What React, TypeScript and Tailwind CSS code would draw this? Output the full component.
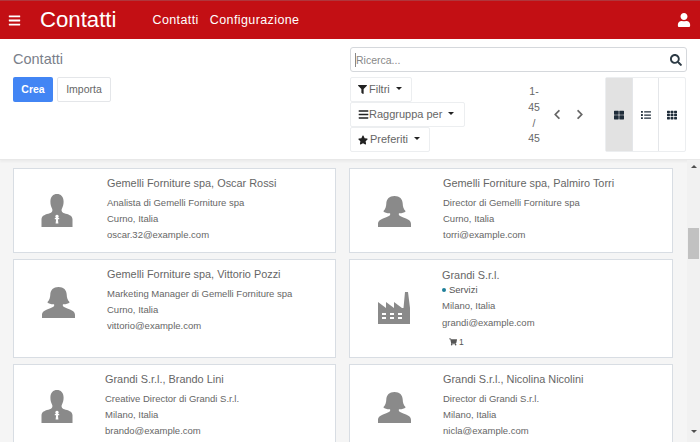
import React from "react";
import { FaBars, FaUser, FaFilter, FaStar, FaChevronLeft, FaChevronRight, FaThLarge, FaList, FaTh, FaShoppingCart, FaSearch } from "react-icons/fa";

const Male = () => (
  <svg viewBox="0 0 32 33" className="w-[32px] h-[33px]" aria-hidden="true">
    <path fill="#8a8a8a" d="M16 0c3.800 0 6.600 2.600 6.600 7.500 0 2.600-.6 5-1.500 6.700-.5.9-.7 2-.3 3 .4 1 1.400 1.600 2.500 2 3.500 1 8.200 2 8.200 6V33H.5v-7.800c0-4 4.700-5 8.200-6 1.100-.4 2.100-1 2.500-2 .4-1 .2-2.100-.3-3C10 12.500 9.400 10.100 9.400 7.500 9.400 2.600 12.200 0 16 0z" />
    <path fill="#fff" d="M16 20.800a1.700 1.700 0 0 1 1.300 2.800l-.3.400h1.200v1.300h-1.300l.5 4.200h-2.800l.5-4.200h-1.300V24h1.200l-.3-.4A1.700 1.700 0 0 1 16 20.800z" />
  </svg>
);
const Female = () => (
  <svg viewBox="0 0 33 31" className="w-[33px] h-[31px]" aria-hidden="true">
    <path fill="#8a8a8a" d="M16.500 0c5.200 0 8 3 8.200 7.500.1 2.800.6 5.600 3 7.800-1.500 1.500-4.500 2.200-6.700 2-.3.800-.3 1.600.3 2.200 1.500 1.300 4 1.800 6.700 3 2.700 1.100 5 2.500 5 5.500v3H0v-3c0-3 2.300-4.400 5-5.500 2.700-1.200 5.200-1.700 6.700-3 .6-.6.600-1.400.3-2.200-2.200.2-5.200-.5-6.700-2 2.400-2.200 2.900-5 3-7.800C8.500 3 11.300 0 16.500 0z" />
  </svg>
);
const Factory = () => (
  <svg viewBox="0 0 32 32" className="w-[32px] h-[32px]" aria-hidden="true">
    <path fill="#8a8a8a" d="M0 10l8 6v-6l8 6v-6l8 6 1.500 0L27 0h3l2 16V32H0z" />
    <path fill="#fff" d="M4 21h4v2H4zM12 21h4v2h-4zM20 21h4v2h-4zM4 25h4v2H4zM12 25h4v2h-4zM20 25h4v2h-4z" />
  </svg>
);

type Card = { kind: "m" | "f" | "c"; title: string; lines: string[]; h: string; left?: string };
const cards: Card[] = [
  { kind: "m", title: "Gemelli Forniture spa, Oscar Rossi", lines: ["Analista di Gemelli Forniture spa", "Curno, Italia", "oscar.32@example.com"], h: "h-[85px]" },
  { kind: "f", title: "Gemelli Forniture spa, Palmiro Torri", lines: ["Director di Gemelli Forniture spa", "Curno, Italia", "torri@example.com"], h: "h-[85px]" },
  { kind: "f", title: "Gemelli Forniture spa, Vittorio Pozzi", lines: ["Marketing Manager di Gemelli Forniture spa", "Curno, Italia", "vittorio@example.com"], h: "h-[99px]" },
  { kind: "c", title: "Grandi S.r.l.", lines: ["Milano, Italia", "grandi@example.com"], h: "h-[99px]" },
  { kind: "m", title: "Grandi S.r.l., Brando Lini", lines: ["Creative Director di Grandi S.r.l.", "Milano, Italia", "brando@example.com"], h: "h-[85px]", left: "pl-[91px]" },
  { kind: "f", title: "Grandi S.r.l., Nicolina Nicolini", lines: ["Director di Grandi S.r.l.", "Milano, Italia", "nicla@example.com"], h: "h-[85px]" },
];

function ContactCard({ c }: { c: Card }) {
  const isCompany = c.kind === "c";
  return (
    <div className={`relative bg-white border border-[#d8dde3] ${c.h} ${c.left ?? (isCompany ? "pl-[92px]" : "pl-[93px]")} ${isCompany ? "pt-[8px]" : "pt-[7px]"}`}>
      <div className={`absolute ${isCompany ? "left-[28px] top-[32px]" : c.kind === "m" ? "left-[27px] top-[25px]" : "left-[28px] top-[27px]"}`}>
        {c.kind === "m" ? <Male /> : c.kind === "f" ? <Female /> : <Factory />}
      </div>
      <div className="text-[10.900px] leading-[15px] text-[#666]">{c.title}</div>
      {isCompany && (
        <div className="flex items-center gap-[3px] text-[9.500px] leading-[14px] text-[#555]">
          <span className="w-[4px] h-[4px] rounded-full bg-[#1f7f99]" />
          Servizi
        </div>
      )}
      <div className={isCompany ? "" : "mt-[4px]"}>
        {c.lines.map((l) => (
          <div key={l} className={`text-[9.500px] text-[#666] ${isCompany ? "leading-[17px]" : "leading-[16px]"}`}>{l}</div>
        ))}
      </div>
      {isCompany && (
        <div className="flex items-center gap-[2px] mt-[5px] ml-[7px] text-[8.500px] leading-[12px] text-[#555]">
          <FaShoppingCart className="w-[8px] h-[8px]" /> 1
        </div>
      )}
    </div>
  );
}

function DropBtn({ icon, label, w, pad, gap }: { icon: React.ReactNode; label: string; w: string; pad: string; gap: string }) {
  return (
    <div className={`flex items-center ${w} ${pad} h-[25px] bg-white border border-[#eceef0] rounded-[2px] text-[11px] text-[#666] shrink-0`}>
      <span className={`text-[#222] ${gap}`}>{icon}</span>
      {label}
      <span className="ml-[6px] mb-[3px] w-0 h-0 border-x-[3.500px] border-x-transparent border-t-[3.500px] border-t-[#222]" />
    </div>
  );
}

export default function App() {
  return (
    <div className="w-[700px] h-[442px] overflow-hidden flex flex-col bg-[#f5f5f5] font-['Liberation_Sans',Arial,sans-serif]">
      <header className="h-[39px] shrink-0 bg-[#c30f14] border-t border-[#b0363c] flex items-center text-white">
        <FaBars className="ml-[8px] w-[13px] h-[13px]" />
        <span className="ml-[19px] text-[22.200px] leading-none">Contatti</span>
        <nav className="ml-[36px] flex gap-[11px] text-[12.500px] font-normal tracking-[0.4px]">
          <span>Contatti</span>
          <span>Configurazione</span>
        </nav>
        <FaUser className="ml-auto mr-[9px] w-[14px] h-[14px]" />
      </header>

      <section className="h-[121px] shrink-0 bg-white border-b border-[#e8e8e8] shadow-[0_2px_2px_rgba(0,0,0,0.04)] flex pl-[13px] pr-[13px] pt-[8px]">
        <div className="w-[337px] shrink-0 pt-[2px]">
          <div className="text-[14.500px] leading-[21px] text-[#7a808a]">Contatti</div>
          <div className="flex gap-[4px] mt-[7px]">
            <div className="w-[40px] h-[25px] bg-[#4285f4] rounded-[2px] text-white text-[10.500px] font-bold flex items-center justify-center">Crea</div>
            <div className="w-[54px] h-[25px] bg-white border border-[#e4e6e9] rounded-[2px] text-[#666] text-[10.500px] flex items-center justify-center">Importa</div>
          </div>
        </div>
        <div className="flex-1 min-w-0">
          <div className="h-[25px] border border-[#d5d8dc] rounded-[3px] flex items-center pl-[4px] pr-[4px] text-[10.500px] text-[#888]">
            <span className="flex-1 border-l border-[#888] leading-[14px]">Ricerca...</span>
            <FaSearch className="w-[12px] h-[12px] text-[#2d3b45]" />
          </div>
          <div className="flex mt-[5px]">
            <div className="w-[165px] flex flex-col items-start">
              <DropBtn icon={<FaFilter className="w-[9px] h-[9px]" />} label="Filtri" w="w-[62px]" pad="pl-[7px]" gap="mr-[2px]" />
              <DropBtn icon={<FaBars className="w-[11px] h-[11px]" />} label="Raggruppa per" w="w-[115px]" pad="pl-[7px]" gap="mr-[0px]" />
              <DropBtn icon={<FaStar className="w-[10px] h-[10px]" />} label="Preferiti" w="w-[80px]" pad="pl-[7px]" gap="mr-[2px]" />
            </div>
            <div className="w-[36px] text-center text-[#666] text-[10.500px] leading-[15.800px] pt-[7px] ml-[1px]">1-<br />45<br />/<br />45</div>
            <div className="flex items-center gap-[15px] ml-[1px] text-[#666] h-[75px]">
              <FaChevronLeft className="w-[8px] h-[11px]" />
              <FaChevronRight className="w-[8px] h-[11px]" />
            </div>
            <div className="ml-[21px] flex h-[75px] border border-[#eceef0] rounded-[2px] text-[#1f2d3a]">
              <div className="w-[26px] bg-[#e2e2e2] flex items-center justify-center"><FaThLarge className="w-[10px] h-[10px]" /></div>
              <div className="w-[27px] border-x border-[#e4e6e9] flex items-center justify-center"><FaList className="w-[10px] h-[10px]" /></div>
              <div className="w-[26px] flex items-center justify-center"><FaTh className="w-[10px] h-[10px]" /></div>
            </div>
          </div>
        </div>
      </section>

      <div className="flex-1 min-h-0 flex overflow-hidden">
        <main className="w-[687px] shrink-0 pl-[13px] pt-[8px]">
          <div className="grid grid-cols-[323px_324px] gap-x-[13px] gap-y-[6px]">
            {cards.map((c) => (
              <ContactCard key={c.title} c={c} />
            ))}
          </div>
        </main>
        <div className="relative w-[13px] bg-[#f1f1f1] flex flex-col items-center">
          <span className="mt-[5px] w-0 h-0 border-x-[3px] border-x-transparent border-b-[3px] border-b-[#505050]" />
          <div className="mt-[60px] w-[11px] h-[31px] bg-[#c1c1c1]" />
          <span className="mt-auto mb-[9px] w-0 h-0 border-x-[3px] border-x-transparent border-t-[3px] border-t-[#505050]" />
        </div>
      </div>
    </div>
  );
}
